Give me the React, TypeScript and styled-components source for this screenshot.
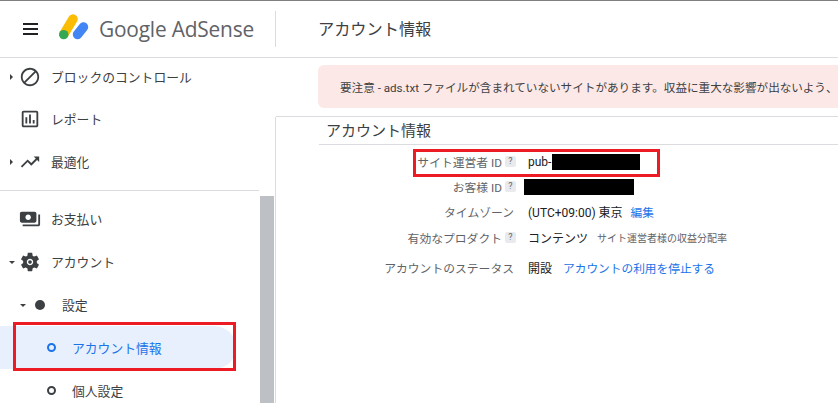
import React from "react";
import styled, { createGlobalStyle } from "styled-components";

const Global = createGlobalStyle`
  html, body { margin: 0; padding: 0; background: #fff; }
  body { font-family: Roboto, "Noto Sans CJK JP", sans-serif; overflow: hidden; }
  * { box-sizing: border-box; }
`;

const Page = styled.div`
  position: relative;
  width: 838px;
  height: 403px;
  overflow: hidden;
  border-top: 1px solid #808080;
  display: flex;
  flex-direction: column;
`;

const Header = styled.header`
  height: 57px;
  flex: none;
  display: flex;
  align-items: center;
  border-bottom: 1px solid #dadce0;
`;

const Brand = styled.div`
  width: 276px;
  height: 36px;
  flex: none;
  display: flex;
  align-items: center;
  padding-left: 22px;
  border-right: 1px solid #dadce0;
`;

const Burger = styled.svg`
  width: 18px;
  height: 12px;
  flex: none;
  margin-right: 19px;
`;

const Logo = styled.svg`
  width: 30px;
  height: 26px;
  flex: none;
  margin: 0 10px 4px 0;
`;

const BrandName = styled.span`
  font-family: "Open Sans", Roboto, sans-serif;
  font-size: 20.9px;
  color: #5f6368;
  white-space: nowrap;
  letter-spacing: -0.2px;
`;

const PageTitle = styled.h1`
  margin: 0 0 2px 42px;
  font-size: 16.2px;
  font-weight: 400;
  color: #3c4043;
  white-space: nowrap;
`;

const Body = styled.div`
  flex: 1;
  display: flex;
  min-height: 0;
`;

const Sidebar = styled.nav`
  position: relative;
  width: 275px;
  flex: none;
  overflow: hidden;
`;

const Thumb = styled.div`
  position: absolute;
  left: 260px;
  top: 138px;
  bottom: 0;
  width: 14px;
  background: #bdc1c6;
`;

const NavRow = styled.div<{ $active?: boolean; $height?: number; $indent?: number; $after?: number }>`
  position: relative;
  width: ${(p) => (p.$active ? 236 : 260)}px;
  height: ${(p) => p.$height ?? 43}px;
  margin-bottom: ${(p) => p.$after ?? 0}px;
  display: flex;
  align-items: center;
  padding-left: ${(p) => p.$indent ?? 19}px;
  font-size: 12.8px;
  color: ${(p) => (p.$active ? "#1a73e8" : "#3c4043")};
  background: ${(p) => (p.$active ? "#e8f0fe" : "transparent")};
  border-radius: ${(p) => (p.$active ? "0 22px 22px 0" : "0")};
  white-space: nowrap;
`;

const Caret = styled.span<{ $open?: boolean; $x?: number }>`
  position: absolute;
  left: ${(p) => p.$x ?? (p.$open ? 9 : 10)}px;
  top: 50%;
  width: 0;
  height: 0;
  ${(p) =>
    p.$open
      ? `margin-top: -1px; border-left: 3px solid transparent; border-right: 3px solid transparent; border-top: 3px solid #3c4043;`
      : `margin-top: -3px; border-top: 3px solid transparent; border-bottom: 3px solid transparent; border-left: 3px solid #3c4043;`}
`;

const NavIcon = styled.svg`
  width: 22px;
  height: 22px;
  flex: none;
  margin-right: 10px;
  fill: #3c4043;
`;

const Dot = styled.span`
  width: 10px;
  height: 10px;
  flex: none;
  margin-right: 17px;
  border-radius: 50%;
  background: #3c4043;
`;

const Ring = styled.span<{ $active?: boolean }>`
  width: 9px;
  height: 9px;
  flex: none;
  margin-right: 16px;
  border-radius: 50%;
  border: 2px solid ${(p) => (p.$active ? "#1a73e8" : "#3c4043")};
`;

const NavDivider = styled.div`
  width: 259px;
  height: 1px;
  background: #dadce0;
  margin: 7px 0 6px;
`;

const Main = styled.main`
  flex: 1;
  min-width: 0;
  display: flex;
  flex-direction: column;
`;

const BannerBar = styled.div`
  height: 59px;
  flex: none;
  padding: 7px 0 8px 42px;
  margin-left: 1px;
  border-bottom: 1px solid #dadce0;
`;

const Banner = styled.div`
  height: 43px;
  display: flex;
  align-items: center;
  padding-left: 22px;
  background: #fce8e6;
  border-radius: 6px 0 0 6px;
  font-size: 11.6px;
  color: #3c4043;
  white-space: nowrap;
`;

const Content = styled.section`
  flex: 1;
  border-left: 1px solid #dadce0;
  padding-left: 43px;
`;

const SectionTitle = styled.h2`
  margin: 0;
  height: 28px;
  padding: 2px 0 0 7px;
  border-bottom: 1px solid #dadce0;
  font-size: 15px;
  line-height: 25px;
  font-weight: 400;
  color: #3c4043;
  white-space: nowrap;
`;

const Rows = styled.div`
  padding-top: 4px;
`;

const Row = styled.div<{ $top?: number }>`
  display: flex;
  align-items: center;
  height: 25px;
  margin-top: ${(p) => p.$top ?? 0}px;
  font-size: 12px;
  white-space: nowrap;
`;

const Label = styled.div`
  width: 209px;
  flex: none;
  display: flex;
  justify-content: flex-end;
  align-items: center;
  padding-right: 14px;
  font-size: 11.8px;
  color: #5f6368;
`;

const Help = styled.span`
  width: 11px;
  height: 11px;
  margin: 0 -2px 0 3px;
  border-radius: 2px;
  background: #e8eaed;
  color: #5f6368;
  font-size: 9px;
  line-height: 11px;
  text-align: center;
`;

const Value = styled.span`
  color: #202124;
`;

const Small = styled.span`
  margin-left: 9px;
  font-size: 10px;
  color: #5f6368;
`;

const LinkText = styled.a<{ $gap: number }>`
  margin-left: ${(p) => p.$gap}px;
  font-size: 11.7px;
  color: #1a73e8;
`;

const Redaction = styled.span<{ $w: number; $shift?: number }>`
  display: inline-block;
  width: ${(p) => p.$w}px;
  height: 16px;
  margin-left: ${(p) => p.$shift ?? 0}px;
  background: #000;
`;

const Callout = styled.div<{ $x: number; $y: number; $w: number; $h: number }>`
  position: absolute;
  left: ${(p) => p.$x}px;
  top: ${(p) => p.$y}px;
  width: ${(p) => p.$w}px;
  height: ${(p) => p.$h}px;
  border: 3px solid #ed1c24;
  pointer-events: none;
`;

const paths = {
  block:
    "M12 2C6.48 2 2 6.48 2 12s4.48 10 10 10 10-4.48 10-10S17.52 2 12 2zM4 12c0-4.42 3.58-8 8-8 1.85 0 3.55.63 4.9 1.69L5.69 16.9C4.63 15.55 4 13.85 4 12zm8 8c-1.85 0-3.55-.63-4.9-1.69L18.31 7.1C19.37 8.45 20 10.15 20 12c0 4.42-3.58 8-8 8z",
  report:
    "M19 3H5c-1.1 0-2 .9-2 2v14c0 1.1.9 2 2 2h14c1.1 0 2-.9 2-2V5c0-1.1-.9-2-2-2zm0 16H5V5h14v14zM7 10h2v7H7zm4-3h2v10h-2zm4 6h2v4h-2z",
  trend: "M16 6l2.29 2.29-4.88 4.88-4-4L2 16.59 3.41 18l6-6 4 4 6.3-6.29L22 12V6z",
  pay:
    "M19 14V6c0-1.1-.9-2-2-2H3c-1.1 0-2 .9-2 2v8c0 1.1.9 2 2 2h14c1.1 0 2-.9 2-2zm-9-1c-1.66 0-3-1.34-3-3s1.34-3 3-3 3 1.34 3 3-1.34 3-3 3zm13-6v11c0 1.1-.9 2-2 2H4v-2h17V7h2z",
  gear:
    "M19.43 12.98c.04-.32.07-.64.07-.98s-.03-.66-.07-.98l2.11-1.65c.19-.15.24-.42.12-.64l-2-3.46c-.12-.22-.39-.3-.61-.22l-2.49 1c-.52-.4-1.08-.73-1.69-.98l-.38-2.65C14.46 2.18 14.25 2 14 2h-4c-.25 0-.46.18-.49.42l-.38 2.65c-.61.25-1.17.59-1.69.98l-2.49-1c-.23-.09-.49 0-.61.22l-2 3.46c-.13.22-.07.49.12.64l2.11 1.65c-.04.32-.07.65-.07.98s.03.66.07.98l-2.11 1.65c-.19.15-.24.42-.12.64l2 3.46c.12.22.39.3.61.22l2.49-1c.52.4 1.08.73 1.69.98l.38 2.65c.03.24.24.42.49.42h4c.25 0 .46-.18.49-.42l.38-2.65c.61-.25 1.17-.59 1.69-.98l2.49 1c.23.09.49 0 .61-.22l2-3.46c.12-.22.07-.49-.12-.64l-2.11-1.65zM12 15.5c-1.93 0-3.5-1.57-3.5-3.5s1.57-3.5 3.5-3.5 3.5 1.57 3.5 3.5-1.57 3.5-3.5 3.5zm0-5.5c-1.1 0-2 .9-2 2s.9 2 2 2 2-.9 2-2-.9-2-2-2z",
};

const Icon = ({ d }: { d: string }) => (
  <NavIcon viewBox="0 0 24 24">
    <path d={d} fillRule="evenodd" />
  </NavIcon>
);

export default function App() {
  return (
    <>
      <Global />
      <Page>
        <Header>
          <Brand>
            <Burger viewBox="0 0 18 12">
              <path d="M1 0h15v2H1zM1 5h15v2H1zM1 10h15v2H1z" fill="#202124" />
            </Burger>
            <Logo viewBox="0 0 30 26">
              <path d="M14 5 L5 20" stroke="#fbbc04" strokeWidth="9.4" strokeLinecap="round" />
              <path d="M24.5 13 L18.5 20.5" stroke="#4285f4" strokeWidth="9.4" strokeLinecap="round" />
              <circle cx="4.7" cy="20.6" r="4.7" fill="#34a853" />
            </Logo>
            <BrandName>Google AdSense</BrandName>
          </Brand>
          <PageTitle>アカウント情報</PageTitle>
        </Header>
        <Body>
          <Sidebar>
            <NavRow $height={37} $after={2}>
              <Caret />
              <Icon d={paths.block} />
              ブロックのコントロール
            </NavRow>
            <NavRow>
              <Icon d={paths.report} />
              レポート
            </NavRow>
            <NavRow>
              <Caret />
              <Icon d={paths.trend} />
              最適化
            </NavRow>
            <NavDivider />
            <NavRow>
              <Icon d={paths.pay} />
              お支払い
            </NavRow>
            <NavRow>
              <Caret $open />
              <Icon d={paths.gear} />
              アカウント
            </NavRow>
            <NavRow $indent={35}>
              <Caret $open $x={20} />
              <Dot />
              設定
            </NavRow>
            <NavRow $active $indent={47}>
              <Ring $active />
              アカウント情報
            </NavRow>
            <NavRow $indent={47}>
              <Ring />
              個人設定
            </NavRow>
            <Thumb />
          </Sidebar>
          <Main>
            <BannerBar>
              <Banner>要注意 - ads.txt ファイルが含まれていないサイトがあります。収益に重大な影響が出ないよう、</Banner>
            </BannerBar>
            <Content>
              <SectionTitle>アカウント情報</SectionTitle>
              <Rows>
                <Row>
                  <Label>
                    サイト運営者 ID
                    <Help>?</Help>
                  </Label>
                  <Value>pub-</Value>
                  <Redaction $w={88} $shift={1} />
                </Row>
                <Row>
                  <Label>
                    お客様 ID
                    <Help>?</Help>
                  </Label>
                  <Redaction $w={110} $shift={-4} />
                </Row>
                <Row>
                  <Label>タイムゾーン</Label>
                  <Value>(UTC+09:00) 東京</Value>
                  <LinkText $gap={8}>編集</LinkText>
                </Row>
                <Row $top={1}>
                  <Label>
                    有効なプロダクト
                    <Help>?</Help>
                  </Label>
                  <Value>コンテンツ</Value>
                  <Small>サイト運営者様の収益分配率</Small>
                </Row>
                <Row $top={5}>
                  <Label>アカウントのステータス</Label>
                  <Value>開設</Value>
                  <LinkText $gap={11}>アカウントの利用を停止する</LinkText>
                </Row>
              </Rows>
            </Content>
          </Main>
        </Body>
        <Callout $x={413} $y={148} $w={247} $h={28} />
        <Callout $x={13} $y={321} $w={223} $h={49} />
      </Page>
    </>
  );
}
